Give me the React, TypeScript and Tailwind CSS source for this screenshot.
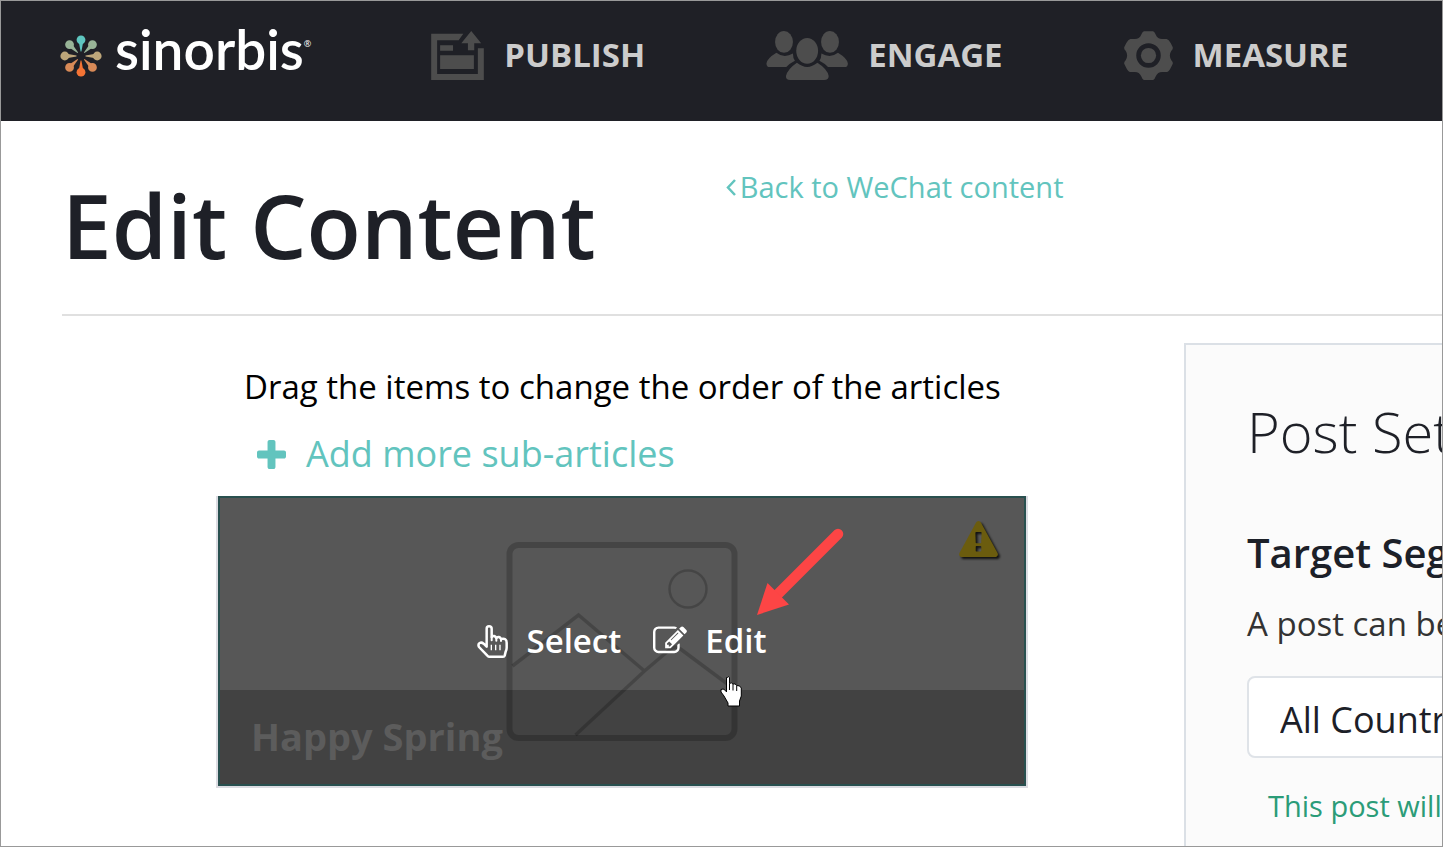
import type { ReactNode } from 'react';

const Logo = () => (
  <a href="#" className="flex items-start gap-[13px]" aria-label="sinorbis">
    <svg width="42" height="42" viewBox="-21 -21 42 42" className="mt-[14px]">
      {[
        ['#5ec6c0', 0],
        ['#98b497', 45],
        ['#bda67a', 90],
        ['#d88a57', 135],
        ['#f47334', 180],
        ['#d88a57', 225],
        ['#bda67a', 270],
        ['#98b497', 315],
      ].map(([color, angle]) => (
        <g key={angle} fill={color as string} transform={`rotate(${angle})`}>
          <circle cx="0" cy="-16.2" r="4.4" />
          <path d="M-2 -13L-0.4 -4.5H0.4L2 -13Z" />
        </g>
      ))}
    </svg>
    <span className="flex items-start text-white">
      <span className="font-['Lato',sans-serif] text-[55px] leading-[56px] font-semibold">sinorbis</span>
      <span className="pt-[17px] text-[9px] leading-3">®</span>
    </span>
  </a>
);

const PublishIcon = () => (
  <svg width="53" height="49" viewBox="33 62 159 148" fill="currentColor">
    <path d="M33 70H130L116 90H51V192H174V114H192V210H33Z" />
    <path d="M154 62L184 99H163V120H144V99H124Z" />
    <path d="M60 105H99V122H60ZM60 135H162V177H60Z" />
  </svg>
);

const EngageIcon = () => (
  <svg width="82" height="49" viewBox="1037 62 247 148" fill="currentColor">
    <ellipse cx="1091" cy="95" rx="27" ry="33" />
    <ellipse cx="1230" cy="95" rx="27" ry="33" />
    <ellipse cx="1161" cy="122" rx="33" ry="39" />
    <path d="M1038 160Q1040 145 1068 128Q1091 146 1118 130Q1118 144 1124 152Q1108 160 1098 171H1048Q1038 171 1038 160Z" />
    <path d="M1284 160Q1282 145 1254 128Q1231 146 1204 130Q1204 144 1198 152Q1214 160 1224 171H1274Q1284 171 1284 160Z" />
    <path d="M1130 158Q1161 183 1192 158Q1222 177 1226 198Q1226 210 1212 210H1110Q1096 210 1097 198Q1102 177 1130 158Z" />
  </svg>
);

const MeasureIcon = () => (
  <svg width="49" height="49" viewBox="791 62 148 148" fill="currentColor">
    <path
      fillRule="evenodd"
      d="M851 63H879Q884 65 887 73Q893 87 908 86H920Q926 87 932 98L938 110Q940 116 934 122Q925 136 934 150Q940 156 938 162L932 174Q926 186 920 186H908Q893 185 887 199Q884 208 879 210H851Q846 208 843 199Q837 185 822 186H810Q804 186 798 174L792 162Q790 156 796 150Q805 136 796 122Q790 116 792 110L798 98Q804 87 810 86H822Q837 87 843 73Q846 65 851 63ZM865 99A37 37 0 1 0 865 173A37 37 0 1 0 865 99Z"
    />
    <circle cx="865" cy="136" r="23" />
  </svg>
);

const NavItem = ({ icon, label }: { icon: ReactNode; label: string }) => (
  <a href="#" className="flex items-end gap-5 text-[#4d4d4d]">
    {icon}
    <span className="text-[33px] leading-[50px] font-bold text-[#cccccc]">{label}</span>
  </a>
);

const AngleLeft = () => (
  <svg width="10" height="17" viewBox="0 0 10 17" fill="none" stroke="currentColor" strokeWidth="2.500">
    <path d="M9 1L2 8.5L9 16" />
  </svg>
);

const PlusIcon = () => (
  <svg width="29" height="29" viewBox="192 128 1408 1408" fill="currentColor">
    <path d="M1600 736v192q0 40-28 68t-68 28h-416v416q0 40-28 68t-68 28h-192q-40 0-68-28t-28-68v-416h-416q-40 0-68-28t-28-68v-192q0-40 28-68t68-28h416v-416q0-40 28-68t68-28h192q40 0 68 28t28 68v416h416q40 0 68 28t28 68z" />
  </svg>
);

const HandIcon = () => (
  <svg
    width="31"
    height="33"
    viewBox="12 14 93 99"
    fill="none"
    stroke="currentColor"
    strokeWidth="7.500"
    strokeLinejoin="round"
    strokeLinecap="round"
  >
    <path d="M41 76V25Q41 18 48 18Q56 18 56 25V50Q64 43 70 53Q79 46 84 56Q101 52 101 67V82Q101 88 98 94L95 106Q94 109 90 109H48Q45 109 43 106L18 80Q14 72 20 68Q26 65 32 70L41 79" />
    <path d="M56 50V60M70 53V61M84 56V62" strokeWidth="6" />
    <path d="M55 73V90M68 73V90M81 73V90" strokeWidth="4" strokeLinecap="butt" />
  </svg>
);

const EditIcon = () => (
  <svg width="34" height="34" viewBox="0 0 1792 1792" fill="currentColor">
    <path d="M888 1184l116-116-152-152-116 116v56h96v96h56zm440-720q-16-16-33 1l-350 350q-17 17-1 33t33-1l350-350q17-17 1-33zm80 594v190q0 119-84.5 203.5t-203.5 84.5h-832q-119 0-203.5-84.5t-84.5-203.5v-832q0-119 84.5-203.5t203.5-84.5h832q63 0 117 25 15 7 18 23 3 17-9 29l-49 49q-14 14-32 8-23-6-45-6h-832q-66 0-113 47t-47 113v832q0 66 47 113t113 47h832q66 0 113-47t47-113v-126q0-13 9-22l64-64q15-15 35-7t20 29zm-96-738l288 288-672 672h-288v-288zm444 132l-92 92-288-288 92-92q28-28 68-28t68 28l152 152q28 28 28 68t-28 68z" />
  </svg>
);

const WarningIcon = () => (
  <svg
    width="39"
    height="36"
    viewBox="0 0 1792 1664"
    fill="currentColor"
    className="absolute top-[23px] right-[26px] text-[#6b5c0e] drop-shadow-[2px_2px_1px_#111111]"
  >
    <path d="M1024 1375v-190q0-14-9.5-23.5t-22.5-9.5h-192q-13 0-22.5 9.5t-9.5 23.5v190q0 14 9.5 23.5t22.5 9.5h192q13 0 22.5-9.5t9.5-23.5zm-2-374l18-459q0-12-10-19-13-11-24-11h-220q-11 0-24 11-10 7-10 21l17 457q0 10 10 16.5t24 6.5h185q14 0 23.5-6.5t10.5-16.5zm-14-934l768 1408q35 63-2 126-17 29-46.5 46t-63.5 17h-1536q-34 0-63.5-17t-46.5-46q-37-63-2-126l768-1408q17-31 47-49t65-18 65 18 47 49z" />
  </svg>
);

const Placeholder = () => (
  <svg
    width="232"
    height="199"
    viewBox="0 0 231 199"
    fill="none"
    stroke="#000000"
    strokeOpacity="0.2"
    className="absolute top-[44px] left-1/2 -translate-x-1/2"
  >
    <rect x="3" y="3" width="225" height="193" rx="9" strokeWidth="6" />
    <circle cx="181.500" cy="47" r="18.500" strokeWidth="2.500" />
    <path d="M6 124L72 73L138 129M69 193L138 129L164 107Q169 103 174 107L225 145" strokeWidth="3.500" />
  </svg>
);

const Arrow = () => (
  <svg width="88" height="88" viewBox="756 528 88 88" className="absolute top-[30px] left-[536px]">
    <path d="M838 534L775 597" stroke="#fd4545" strokeWidth="10.500" strokeLinecap="round" />
    <path d="M757 615L767.500 583L789 604.500Z" fill="#fd4545" />
  </svg>
);

const Cursor = () => (
  <svg width="22" height="31" viewBox="0 0 22 31" className="absolute top-[178px] left-[500px]">
    <path
      d="M7.500 1.500Q8.500 0 9.500 1.500V7.500Q11.500 6 13 8Q15.500 7 16.500 9.500Q20 9 21.300 12V20L19.500 25V30H8V27L4 20L1 16V13.500Q3 12 5.500 14.500L6.500 16V1.500Z"
      fill="#ffffff"
      stroke="#000000"
      strokeWidth="1"
    />
    <path d="M9.500 7.500V14M13 8V14.500M16.700 10V15" stroke="#000000" strokeWidth="1" />
  </svg>
);

const ArticleCard = () => (
  <article className="border-x-2 border-b-2 border-[#dcdce2]">
    <div className="relative border-2 border-[#29504f] bg-[#575757]">
      <h3 className="mt-[192px] bg-[#424242] px-[31px] pt-5 pb-[22px] text-[38px] leading-[52px] font-bold text-[#5c5c5c]">
        Happy Spring
      </h3>
      <Placeholder />
      <WarningIcon />
      <div className="absolute inset-0 flex items-center justify-center gap-8 text-[33px] leading-[44px] font-semibold text-white">
        <button type="button" className="flex items-center gap-[18px]">
          <HandIcon />
          Select
        </button>
        <button type="button" className="flex items-center gap-[18px]">
          <EditIcon />
          Edit
        </button>
      </div>
      <Arrow />
      <Cursor />
    </div>
  </article>
);

const PostSettings = () => (
  <aside className="w-[258px] shrink-0 overflow-hidden border-t-2 border-l-2 border-[#dbe0e6] bg-[#fbfbfb] whitespace-nowrap">
    <div className="flex min-w-[600px] flex-col items-start px-[61px] pt-[48px]">
      <h2 className="text-[56px] leading-[76px] font-light text-[#1e2027]">Post Settings</h2>
      <label htmlFor="segment" className="mt-[56px] text-[40px] leading-[56px] font-semibold text-[#1c2028]">
        Target Segment
      </label>
      <p className="mt-[19px] text-[33px] leading-[48px] text-[#333333]">A post can be sent to</p>
      <select
        id="segment"
        className="mt-[28px] h-[82px] w-full appearance-none rounded-lg border-2 border-[#dfe3e8] bg-white px-[31px] pt-1.5 text-[36px] text-[#1c2028]"
      >
        <option>All Countries</option>
      </select>
      <p className="mt-[28px] px-[21px] text-[29px] leading-[40px] text-[#2b9c78]">This post will be sent to all</p>
    </div>
  </aside>
);

export default function App() {
  return (
    <div className="flex h-screen flex-col overflow-hidden border border-[#999999] bg-white font-['Open_Sans',sans-serif]">
      <header className="flex h-[120px] shrink-0 items-start bg-[#1f2026] pt-[20px] pl-[59px]">
        <Logo />
        <nav className="flex gap-[121px] pt-[9px] pl-[120px]">
          <NavItem icon={<PublishIcon />} label="PUBLISH" />
          <NavItem icon={<EngageIcon />} label="ENGAGE" />
          <NavItem icon={<MeasureIcon />} label="MEASURE" />
        </nav>
      </header>
      <div className="ml-[61px] flex h-[195px] shrink-0 items-start gap-[130px] border-b-2 border-[#e0e0e0] pt-[46px]">
        <h1 className="pt-[13px] text-[89px] leading-[90px] font-semibold whitespace-nowrap text-[#1e2027]">
          Edit Content
        </h1>
        <a href="#" className="flex items-center gap-1 text-[29px] leading-[40px] whitespace-nowrap text-[#62c4be]">
          <AngleLeft />
          Back to WeChat content
        </a>
      </div>
      <main className="flex min-h-0 flex-1 gap-[156px] pt-[27px] pl-[215px]">
        <section className="min-w-0 flex-1 pt-[20px]">
          <p className="pl-[28px] text-[33px] leading-[48px] text-black">Drag the items to change the order of the articles</p>
          <button
            type="button"
            className="mt-[15px] mb-[14px] ml-[41px] flex items-center gap-5 text-[36px] leading-[56px] text-[#62c4be]"
          >
            <PlusIcon />
            Add more sub-articles
          </button>
          <ArticleCard />
        </section>
        <PostSettings />
      </main>
    </div>
  );
}
